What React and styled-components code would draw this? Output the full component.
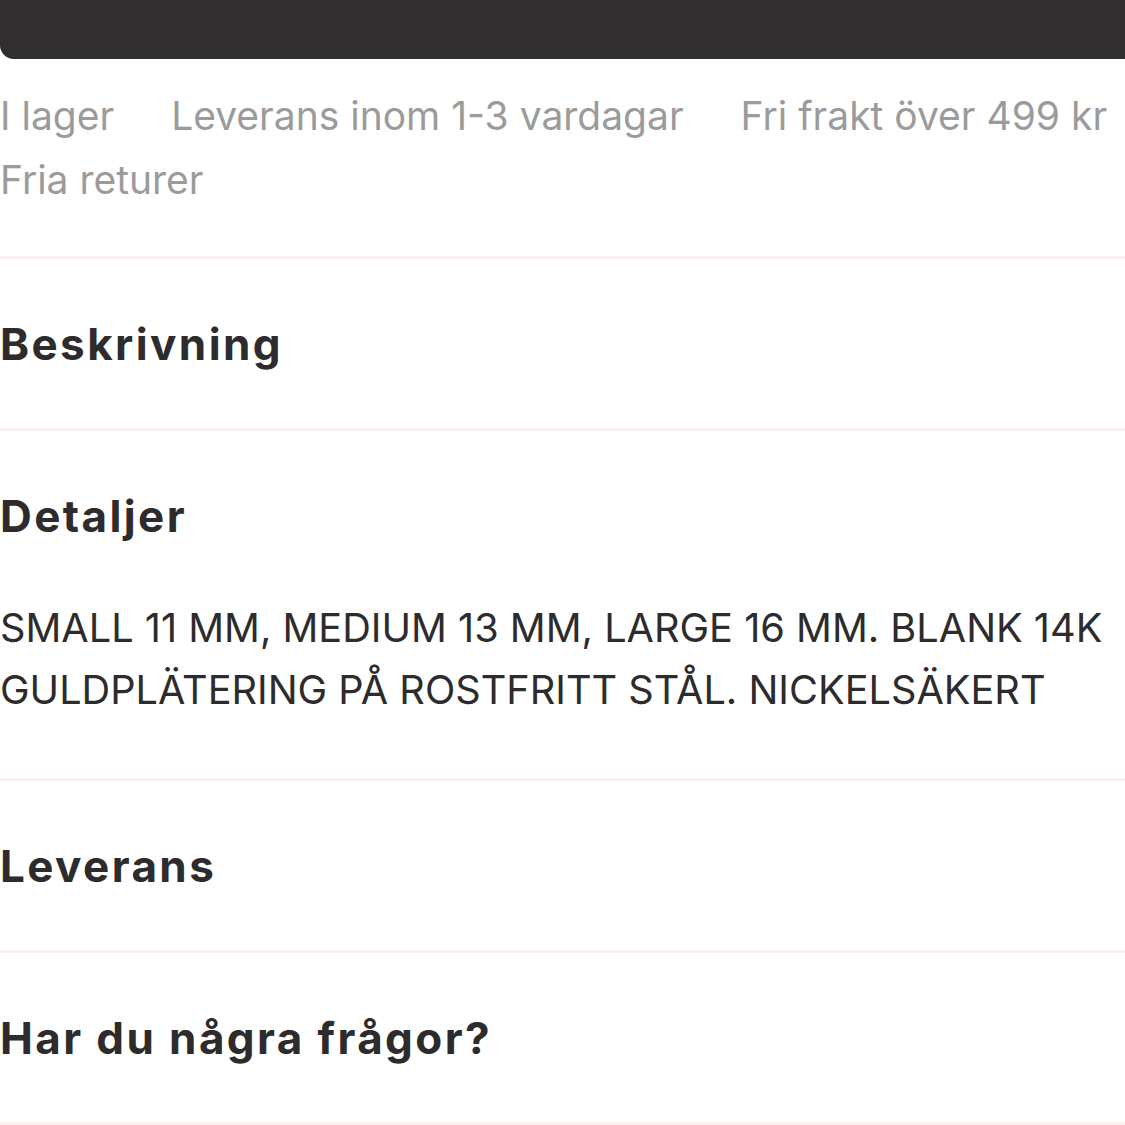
import React from "react";
import styled, { createGlobalStyle } from "styled-components";

const Global = createGlobalStyle`
  html, body { margin: 0; padding: 0; background: #fff; }
  body { font-family: "Inter", "Liberation Sans", sans-serif; overflow: hidden; }
`;

const Page = styled.div`
  width: 1125px;
  display: flex;
  flex-direction: column;
`;

const DarkBar = styled.div`
  height: 59px;
  width: 1140px;
  background: #302e2f;
  border-radius: 0 0 14px 14px;
`;

const InfoList = styled.ul`
  list-style: none;
  margin: 25px 0 44px;
  padding: 0;
  display: flex;
  flex-wrap: wrap;
  column-gap: 57px;
`;

const InfoItem = styled.li`
  font-size: 39px;
  line-height: 64px;
  color: #9b9b9b;
  white-space: nowrap;
`;

const Section = styled.section`
  border-top: 3px solid #f8f1ef;
  display: flex;
  flex-direction: column;
  ${(p) => p.$last && "border-bottom: 3px solid #f8f1ef;"}
`;

const Heading = styled.h2`
  margin: 0;
  height: 169px;
  display: flex;
  align-items: center;
  font-size: 44px;
  font-weight: 700;
  letter-spacing: 2.4px;
  color: #2d2b2c;
`;

const Body = styled.p`
  margin: -3px 0 57px;
  font-size: 39.7px;
  line-height: 62px;
  color: #2d2b2c;
  text-transform: uppercase;
`;

export default function App() {
  return (
    <Page>
      <Global />
      <DarkBar />
      <InfoList>
        <InfoItem>I lager</InfoItem>
        <InfoItem>Leverans inom 1-3 vardagar</InfoItem>
        <InfoItem>Fri frakt över 499 kr</InfoItem>
        <InfoItem>Fria returer</InfoItem>
      </InfoList>
      <Section>
        <Heading>Beskrivning</Heading>
      </Section>
      <Section>
        <Heading>Detaljer</Heading>
        <Body>
          Small 11 mm, medium 13 mm, large 16 mm. Blank 14k guldplätering på rostfritt stål. Nickelsäkert
        </Body>
      </Section>
      <Section>
        <Heading>Leverans</Heading>
      </Section>
      <Section $last>
        <Heading>Har du några frågor?</Heading>
      </Section>
    </Page>
  );
}
